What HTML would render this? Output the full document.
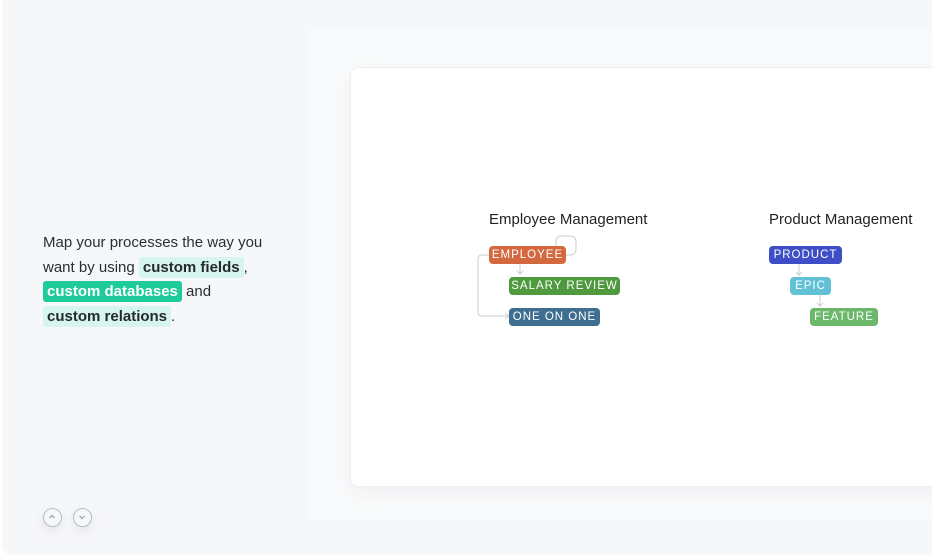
<!DOCTYPE html>
<html><head><meta charset="utf-8"><style>
*{margin:0;padding:0;box-sizing:border-box}
body{width:932px;height:557px;background:#fff;overflow:hidden;font-family:"Liberation Sans",sans-serif;position:relative}
.outer{position:absolute;left:2px;top:0;width:940px;height:555px;background:#f6f7f9;border-radius:0 0 0 10px}
.panel{position:absolute;left:308px;top:30px;width:640px;height:490px;background:#f9fafb}
.card{position:absolute;left:350px;top:67px;width:620px;height:420px;background:#fff;border-radius:8px;border:1px solid #eceef1;box-shadow:0 6px 20px rgba(0,0,0,0.04)}
.txt{position:absolute;left:43px;top:231px;width:236px;font-size:15px;line-height:24.5px;color:#2a2e34}
.hl{background:#d6f5ec;border-radius:3px;padding:2px 4px;font-weight:bold;color:#26292e;white-space:nowrap}
.hl2{background:#1ecb9a;color:#fff;border-radius:3px;padding:2px 4px;font-weight:bold;white-space:nowrap}
.h{position:absolute;font-size:15px;color:#222;}
.tag{position:absolute;height:18px;border-radius:4px;color:#fff;font-size:11.5px;letter-spacing:1px;line-height:18px;text-align:center}
.btn{position:absolute;top:508px;width:19px;height:19px;border-radius:50%;border:1.5px solid #b8bcc2;box-shadow:0 4px 10px rgba(0,0,0,0.08)}
</style></head><body>
<div class="outer"></div>
<div class="panel"></div>
<div class="card"></div>
<div class="txt">Map your processes the way you want by using <span class="hl">custom fields</span>, <span class="hl2">custom databases</span> and <span class="hl">custom relations</span>.</div>

<div class="h" style="left:489px;top:211px">Employee Management</div>
<svg style="position:absolute;left:470px;top:230px" width="130" height="100" fill="none" stroke="#c9ccd1" stroke-width="1">
<path d="M86 25 H100 Q106 25 106 19 V12 Q106 6 100 6 H92 Q86 6 86 12 V18"/>
<path d="M20 25 H12 Q8 25 8 29 V82 Q8 86 12 86 H38"/>
<path d="M35 83 L39 86 L35 89"/>
<path d="M50 34 V44 M47 41 L50 44 L53 41"/>
</svg>
<div class="tag" style="left:489px;top:246px;width:77px;background:#d4693f">EMPLOYEE</div>
<div class="tag" style="left:509px;top:277px;width:111px;background:#4f9a3f">SALARY REVIEW</div>
<div class="tag" style="left:509px;top:308px;width:91px;background:#3e6e90">ONE ON ONE</div>

<div class="h" style="left:769px;top:211px">Product Management</div>
<svg style="position:absolute;left:790px;top:262px" width="50" height="50" fill="none" stroke="#c9ccd1" stroke-width="1">
<path d="M9 2 V13 M6 10 L9 13 L12 10"/>
<path d="M30 33 V44 M27 41 L30 44 L33 41"/>
</svg>
<div class="tag" style="left:769px;top:246px;width:73px;background:#3d4ec6">PRODUCT</div>
<div class="tag" style="left:790px;top:277px;width:41px;background:#62c1d4">EPIC</div>
<div class="tag" style="left:810px;top:308px;width:68px;background:#6bb86a">FEATURE</div>

<div class="btn" style="left:43px"><svg width="16" height="16" style="position:absolute;left:0;top:0" fill="none" stroke="#a8acb2" stroke-width="1.5"><path d="M5.5 9 L8 6.5 L10.5 9"/></svg></div>
<div class="btn" style="left:73px"><svg width="16" height="16" style="position:absolute;left:0;top:0" fill="none" stroke="#a8acb2" stroke-width="1.5"><path d="M5.5 7 L8 9.5 L10.5 7"/></svg></div>
</body></html>
